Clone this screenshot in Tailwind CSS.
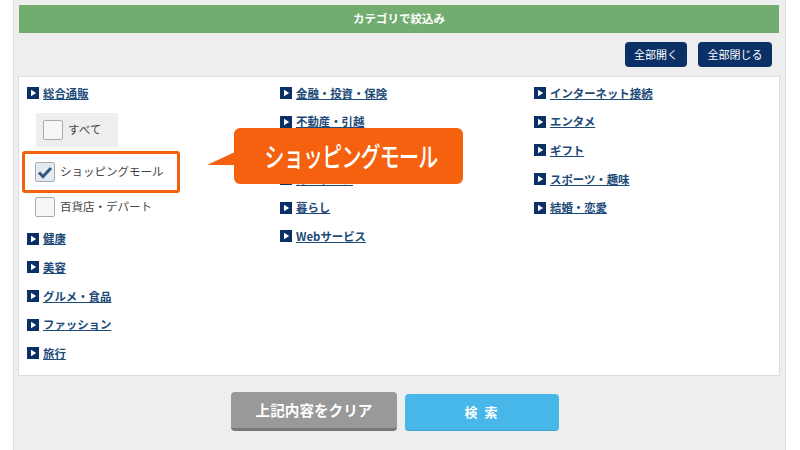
<!DOCTYPE html>
<html lang="ja">
<head>
  <meta charset="UTF-8" />
  <title>カテゴリで絞込み</title>
  <script src="https://cdn.jsdelivr.net/npm/@tailwindcss/browser@4"></script>
</head>
<body class="bg-white font-['Noto_Sans_CJK_JP','Noto_Sans',sans-serif] overflow-hidden">

  <div class="relative ml-[13px] w-[773px] h-[450px] bg-[#eeeeee] border-x border-[#dddddd] pt-[5px] pl-[5px] pr-[5px]">

    <!-- 見出し -->
    <div class="h-[28px] w-[760px] bg-[#72ad6f] flex items-center justify-center text-white text-[11.5px] font-bold">カテゴリで絞込み</div>

    <div class="flex justify-end gap-[11px] mt-[9px] pr-[8px] h-[25px]">
      <button class="w-[62px] h-[25px] bg-[#0a3066] rounded-[4px] text-white text-[11px]">全部開く</button>
      <button class="w-[74px] h-[25px] bg-[#0a3066] rounded-[4px] text-white text-[11px]">全部閉じる</button>
    </div>

    <!-- カテゴリ一覧 -->
    <div class="mt-[9px] w-[762px] h-[300px] -ml-px bg-white border border-[#dddddd] pl-[8px] pt-[2px] grid grid-cols-[253px_254px_1fr]">

      <ul>
        <li class="h-[28.6px] flex items-center gap-[4px]">
          <svg class="w-[12px] h-[12px]" viewBox="0 0 12 12"><rect width="12" height="12" fill="#0a3066"/><path d="M4 2.8 9.2 6 4 9.2z" fill="#fff"/></svg>
          <a class="text-[11.4px] font-bold text-[#1d4a78] underline">総合通販</a>
        </li>
        <li class="h-[112px]">
          <div class="ml-[9px] mt-[5px] w-[82px] h-[34px] bg-[#eeeeee] rounded-[2px] flex items-center pl-[7px] gap-[5px]">
            <span class="w-[20px] h-[20px] bg-[#f6f6f6] border border-[#aaaaaa] rounded-[2px]"></span>
            <span class="text-[11.5px] text-[#444444]">すべて</span>
          </div>
          <div class="-ml-[5px] mt-[4px] w-[158px] h-[42px] bg-white border-[3px] border-[#f26010] rounded-[3px] flex items-center pl-[10px] gap-[5px]">
            <span class="w-[20px] h-[20px] bg-[#e3ebf2] border border-[#aaaaaa] rounded-[2px] flex items-center justify-center">
              <svg class="w-[16px] h-[16px]" viewBox="0 0 16 16"><path d="M2 8.5 6 12.5 14 4" fill="none" stroke="#34597f" stroke-width="3"/></svg>
            </span>
            <span class="text-[11.5px] text-[#444444]">ショッピングモール</span>
          </div>
          <div class="mt-[4px] h-[20px] flex items-center pl-[8px] gap-[5px]">
            <span class="w-[20px] h-[20px] bg-[#f6f6f6] border border-[#aaaaaa] rounded-[2px]"></span>
            <span class="text-[11.5px] text-[#444444]">百貨店・デパート</span>
          </div>
        </li>
        <li class="h-[28.6px] flex items-center gap-[4px]">
          <svg class="w-[12px] h-[12px]" viewBox="0 0 12 12"><rect width="12" height="12" fill="#0a3066"/><path d="M4 2.8 9.2 6 4 9.2z" fill="#fff"/></svg>
          <a class="text-[11.4px] font-bold text-[#1d4a78] underline">健康</a>
        </li>
        <li class="h-[28.6px] flex items-center gap-[4px]">
          <svg class="w-[12px] h-[12px]" viewBox="0 0 12 12"><rect width="12" height="12" fill="#0a3066"/><path d="M4 2.8 9.2 6 4 9.2z" fill="#fff"/></svg>
          <a class="text-[11.4px] font-bold text-[#1d4a78] underline">美容</a>
        </li>
        <li class="h-[28.6px] flex items-center gap-[4px]">
          <svg class="w-[12px] h-[12px]" viewBox="0 0 12 12"><rect width="12" height="12" fill="#0a3066"/><path d="M4 2.8 9.2 6 4 9.2z" fill="#fff"/></svg>
          <a class="text-[11.4px] font-bold text-[#1d4a78] underline">グルメ・食品</a>
        </li>
        <li class="h-[28.6px] flex items-center gap-[4px]">
          <svg class="w-[12px] h-[12px]" viewBox="0 0 12 12"><rect width="12" height="12" fill="#0a3066"/><path d="M4 2.8 9.2 6 4 9.2z" fill="#fff"/></svg>
          <a class="text-[11.4px] font-bold text-[#1d4a78] underline">ファッション</a>
        </li>
        <li class="h-[28.6px] flex items-center gap-[4px]">
          <svg class="w-[12px] h-[12px]" viewBox="0 0 12 12"><rect width="12" height="12" fill="#0a3066"/><path d="M4 2.8 9.2 6 4 9.2z" fill="#fff"/></svg>
          <a class="text-[11.4px] font-bold text-[#1d4a78] underline">旅行</a>
        </li>
      </ul>

      <ul>
        <li class="h-[28.6px] flex items-center gap-[4px]">
          <svg class="w-[12px] h-[12px]" viewBox="0 0 12 12"><rect width="12" height="12" fill="#0a3066"/><path d="M4 2.8 9.2 6 4 9.2z" fill="#fff"/></svg>
          <a class="text-[11.4px] font-bold text-[#1d4a78] underline">金融・投資・保険</a>
        </li>
        <li class="h-[28.6px] flex items-center gap-[4px]">
          <svg class="w-[12px] h-[12px]" viewBox="0 0 12 12"><rect width="12" height="12" fill="#0a3066"/><path d="M4 2.8 9.2 6 4 9.2z" fill="#fff"/></svg>
          <a class="text-[11.4px] font-bold text-[#1d4a78] underline">不動産・引越</a>
        </li>
        <li class="h-[28.6px] flex items-center gap-[4px]">
          <svg class="w-[12px] h-[12px]" viewBox="0 0 12 12"><rect width="12" height="12" fill="#0a3066"/><path d="M4 2.8 9.2 6 4 9.2z" fill="#fff"/></svg>
          <a class="text-[11.4px] font-bold text-[#1d4a78] underline">車・バイク</a>
        </li>
        <li class="h-[28.6px] flex items-center gap-[4px]">
          <svg class="w-[12px] h-[12px]" viewBox="0 0 12 12"><rect width="12" height="12" fill="#0a3066"/><path d="M4 2.8 9.2 6 4 9.2z" fill="#fff"/></svg>
          <a class="text-[11.4px] font-bold text-[#1d4a78] underline">カーライフ</a>
        </li>
        <li class="h-[28.6px] flex items-center gap-[4px]">
          <svg class="w-[12px] h-[12px]" viewBox="0 0 12 12"><rect width="12" height="12" fill="#0a3066"/><path d="M4 2.8 9.2 6 4 9.2z" fill="#fff"/></svg>
          <a class="text-[11.4px] font-bold text-[#1d4a78] underline">暮らし</a>
        </li>
        <li class="h-[28.6px] flex items-center gap-[4px]">
          <svg class="w-[12px] h-[12px]" viewBox="0 0 12 12"><rect width="12" height="12" fill="#0a3066"/><path d="M4 2.8 9.2 6 4 9.2z" fill="#fff"/></svg>
          <a class="text-[11.4px] font-bold text-[#1d4a78] underline">Webサービス</a>
        </li>
      </ul>

      <ul>
        <li class="h-[28.6px] flex items-center gap-[4px]">
          <svg class="w-[12px] h-[12px]" viewBox="0 0 12 12"><rect width="12" height="12" fill="#0a3066"/><path d="M4 2.8 9.2 6 4 9.2z" fill="#fff"/></svg>
          <a class="text-[11.4px] font-bold text-[#1d4a78] underline">インターネット接続</a>
        </li>
        <li class="h-[28.6px] flex items-center gap-[4px]">
          <svg class="w-[12px] h-[12px]" viewBox="0 0 12 12"><rect width="12" height="12" fill="#0a3066"/><path d="M4 2.8 9.2 6 4 9.2z" fill="#fff"/></svg>
          <a class="text-[11.4px] font-bold text-[#1d4a78] underline">エンタメ</a>
        </li>
        <li class="h-[28.6px] flex items-center gap-[4px]">
          <svg class="w-[12px] h-[12px]" viewBox="0 0 12 12"><rect width="12" height="12" fill="#0a3066"/><path d="M4 2.8 9.2 6 4 9.2z" fill="#fff"/></svg>
          <a class="text-[11.4px] font-bold text-[#1d4a78] underline">ギフト</a>
        </li>
        <li class="h-[28.6px] flex items-center gap-[4px]">
          <svg class="w-[12px] h-[12px]" viewBox="0 0 12 12"><rect width="12" height="12" fill="#0a3066"/><path d="M4 2.8 9.2 6 4 9.2z" fill="#fff"/></svg>
          <a class="text-[11.4px] font-bold text-[#1d4a78] underline">スポーツ・趣味</a>
        </li>
        <li class="h-[28.6px] flex items-center gap-[4px]">
          <svg class="w-[12px] h-[12px]" viewBox="0 0 12 12"><rect width="12" height="12" fill="#0a3066"/><path d="M4 2.8 9.2 6 4 9.2z" fill="#fff"/></svg>
          <a class="text-[11.4px] font-bold text-[#1d4a78] underline">結婚・恋愛</a>
        </li>
      </ul>
    </div>

    <!-- ボタン -->
    <div class="flex items-end justify-center gap-[8px] h-[39px] mt-[16px] pr-[9px]">
      <button class="w-[166px] h-[39px] bg-[#999999] border-b-[3px] border-[#777777] rounded-[4px] text-white text-[14.6px] font-bold">上記内容をクリア</button>
      <button class="w-[154px] h-[37px] bg-[#47b7ea] border-b border-[#3fa3d2] rounded-[4px] text-white text-[13px] tracking-[2px] font-bold">検 索</button>
    </div>

    <!-- 吹き出し -->
    <div class="absolute left-[220px] top-[128px] w-[229px] h-[56px] bg-[#f5610f] rounded-[6px] flex items-center justify-center pl-[5px] text-white text-[27px] font-medium tracking-[-1px] whitespace-nowrap"><span class="inline-block scale-x-[0.74]">ショッピングモール</span></div>
    <svg class="absolute left-[193px] top-[150px] w-[28px] h-[16px]" viewBox="0 0 28 16"><path d="M0 15 28 2V15z" fill="#f5610f"/></svg>
  </div>

</body>
</html>
